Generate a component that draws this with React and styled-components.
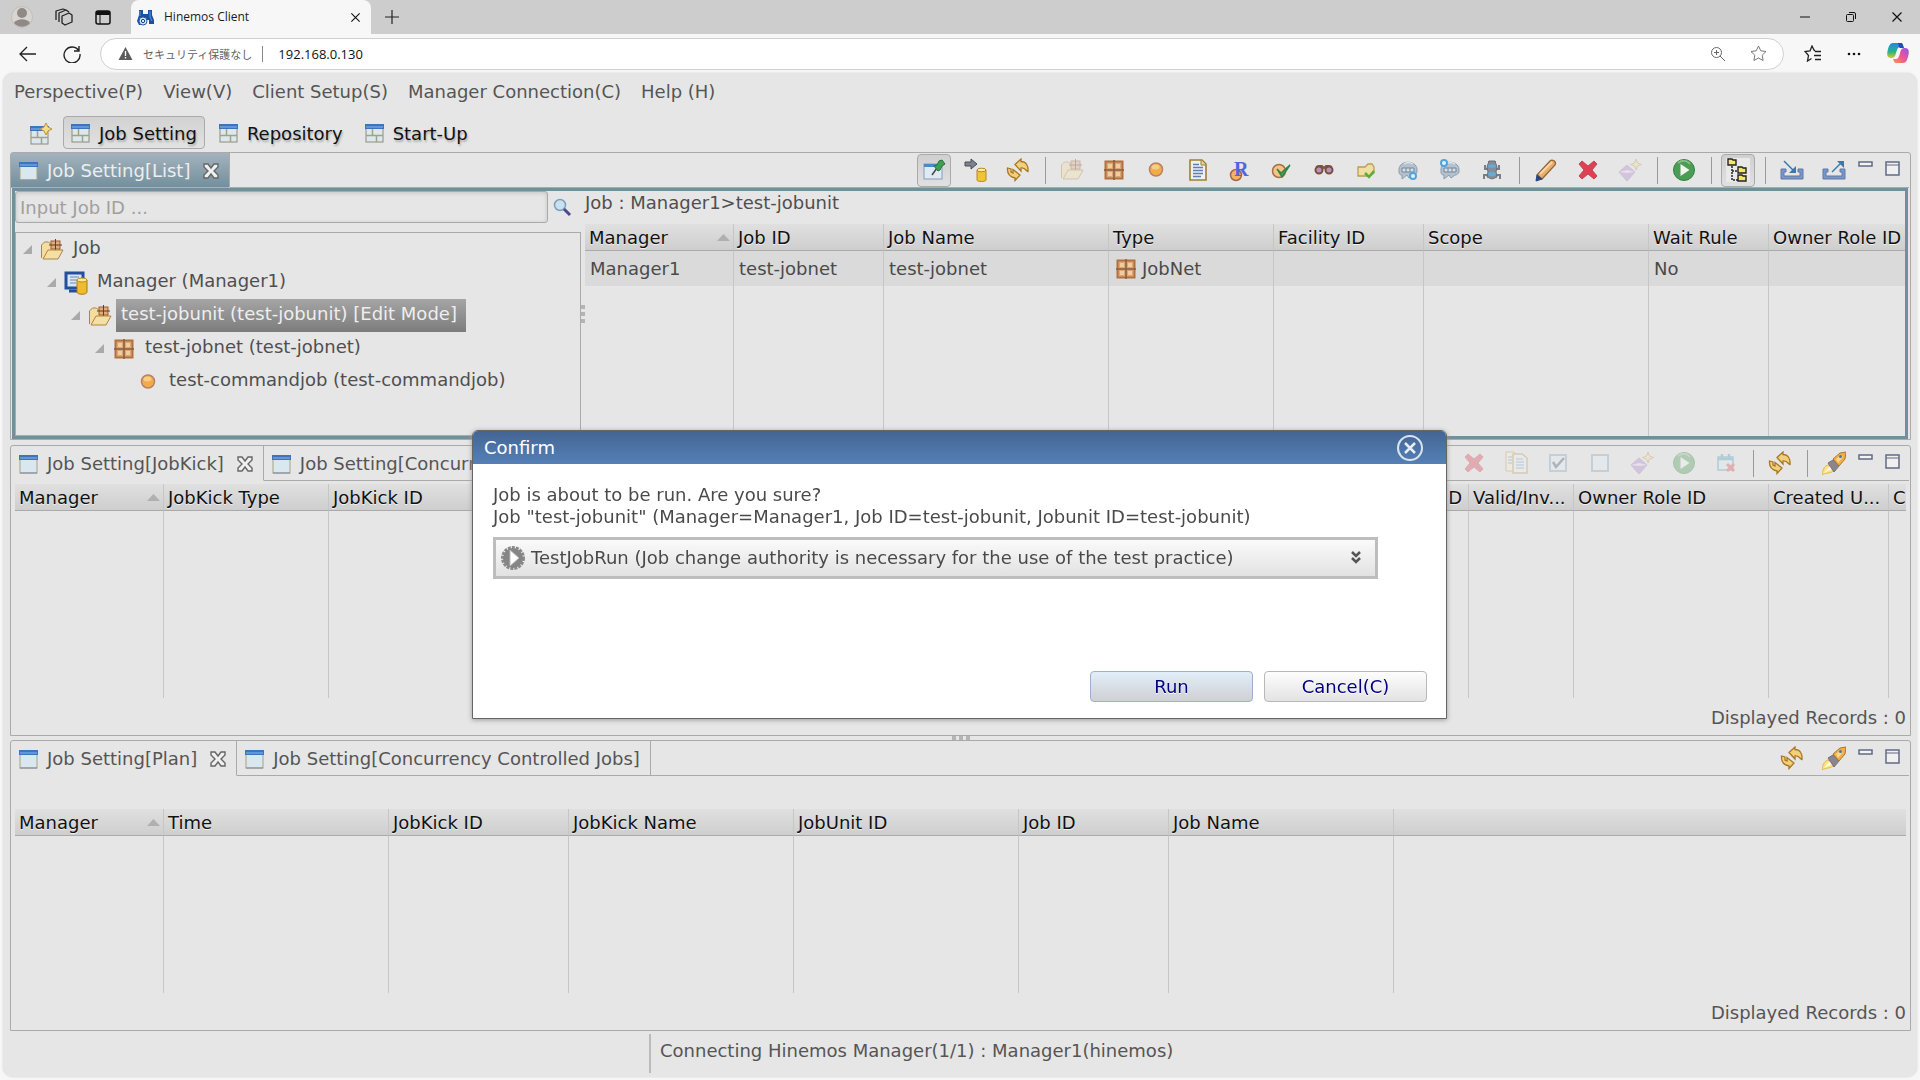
import React from "react";
import styled, { createGlobalStyle, css } from "styled-components";

const GlobalStyle = createGlobalStyle`
    * {
        box-sizing: border-box;
    }

    body {
        margin: 0;
        background: #f7f7f7;
        color: #4a4a4a;
        font-family: Verdana, "DejaVu Sans", sans-serif;
        font-size: 18px;
        line-height: 22px;
    }

    button,
    input {
        font: inherit;
        color: inherit;
    }

    button {
        margin: 0;
        padding: 0;
        border: 0;
        background: none;
    }

    a {
        color: inherit;
        text-decoration: none;
    }

    svg {
        display: block;
        flex-shrink: 0;
    }
`;

const Window = styled.div`
    display: flex;
    flex-direction: column;
    min-height: 100vh;
`;

/* browser frame */

const TitleBar = styled.header`
    display: flex;
    height: 34px;
    background: #cdcdcd;
    font-family: "Segoe UI", "Open Sans", "Noto Sans", sans-serif;
    font-size: 12px;
`;

const TitleTools = styled.div`
    display: flex;
    align-items: center;
    gap: 22px;
    width: 131px;
    padding-left: 11px;
`;

const BrowserTab = styled.div`
    display: flex;
    align-items: center;
    width: 240px;
    padding: 0 10px 0 6px;
    gap: 10px;
    border-radius: 8px 8px 0 0;
    background: #f7f7f7;
    color: #1b1b1b;

    span {
        flex: 1;
    }
`;

const NewTab = styled.button`
    width: 42px;
    display: grid;
    place-items: center;
`;

const WindowControls = styled.div`
    display: flex;
    margin-left: auto;

    button {
        display: grid;
        place-items: center;
        width: 46px;
    }
`;

const AddressBar = styled.div`
    display: flex;
    align-items: center;
    height: 39px;
    background: #f7f7f7;
    font-family: "Segoe UI", "Open Sans", "Noto Sans CJK JP", sans-serif;
    font-size: 13px;
`;

const NavButtons = styled.div`
    display: flex;
    align-items: center;
    gap: 26px;
    width: 100px;
    padding-left: 19px;
`;

const AddressField = styled.div`
    display: flex;
    align-items: center;
    flex: 1;
    height: 32px;
    padding: 0 16px 0 17px;
    border: 1px solid #d0d0d0;
    border-radius: 16px;
    background: #fff;
    gap: 10px;
`;

const Insecure = styled.span`
    padding-right: 10px;
    border-right: 1px solid #8a8a8a;
    color: #616161;
    font-family: "Noto Sans CJK JP", sans-serif;
    font-size: 11px;
    line-height: 16px;
`;

const UrlInput = styled.input`
    flex: 1;
    min-width: 0;
    padding: 0 5px;
    border: 0;
    outline: 0;
    background: none;
    color: #111;
`;

const FieldTools = styled.div`
    display: flex;
    align-items: center;
    gap: 24px;
`;

const BrowserTools = styled.div`
    display: flex;
    align-items: center;
    justify-content: space-between;
    width: 136px;
    padding: 0 11px 0 20px;
`;

/* application */

const Client = styled.div`
    display: flex;
    flex-direction: column;
    flex: 1;
    margin: 0 3px 3px;
    border-radius: 10px;
    background: #e6e6e6;
    box-shadow: 0 0 2px #ccc;
`;

const MenuBar = styled.nav`
    display: flex;
    gap: 20px;
    height: 43px;
    padding: 8px 11px 0;
    color: #555;
`;

const PerspectiveBar = styled.div`
    display: flex;
    align-items: center;
    height: 36px;
    padding: 0 22px 3px;
`;

const PerspectiveButton = styled.button`
    display: flex;
    align-items: center;
    gap: 9px;
    height: 33px;
    padding: 2px ${({ $iconOnly }) => ($iconOnly ? 4 : 7)}px 0;
    margin-right: 6px;
    border: 1px solid transparent;
    border-radius: 4px;
    color: #111;
    text-shadow: 1px 2px 2px #aaa;

    ${({ $active }) =>
        $active &&
        css`
            border-color: #aaa;
            background: linear-gradient(#d2d2d2, #e2e2e2);
        `}
`;

const Workbench = styled.main`
    display: flex;
    flex-direction: column;
    flex: 1;
    padding: 0 6px 0 7px;
`;

const Panel = styled.section`
    display: flex;
    flex-direction: column;
    flex: 1 1 ${({ $basis }) => $basis}px;
    border: 1px solid #aaa;
    border-radius: 3px 3px 0 0;
    min-width: 0;
`;

const PanelHeader = styled.div`
    display: flex;
    height: 35px;
    margin-right: 1px;
`;

const Tab = styled.div`
    display: flex;
    align-items: center;
    gap: 9px;
    padding: 2px 10px 0 8px;
    border-right: 1px solid #aaa;
    border-bottom: 1px solid ${({ $open }) => ($open ? "transparent" : "#aaa")};
    color: ${({ $focused }) => ($focused ? "#eee" : "#555")};
    background: ${({ $focused }) => ($focused ? "linear-gradient(#a3b3bd, #738f9d)" : "none")};
    white-space: nowrap;
`;

const TabClose = styled.button`
    margin-left: 4px;
`;

const ToolBar = styled.div`
    display: flex;
    align-items: center;
    justify-content: flex-end;
    flex: 1;
    border-bottom: 1px solid #aaa;
`;

const ToolButton = styled.button`
    display: grid;
    place-items: center;
    width: 34px;
    height: 33px;
    margin: 0 4px;
    border-radius: 4px;
    border: 1px solid ${({ $pressed }) => ($pressed ? "#aaa" : "transparent")};
    background: ${({ $pressed }) => ($pressed ? "linear-gradient(#d0d0d0, #e0e0e0)" : "none")};

    &:disabled {
        opacity: 0.35;
    }
`;

const Separator = styled.span`
    width: 1px;
    height: 27px;
    margin: 0 5px 0 6px;
    background: #999;
`;

const SizeButtons = styled.div`
    display: flex;
    align-items: flex-start;
    align-self: stretch;
    gap: 12px;
    padding: 8px 9px 0 3px;
`;

const PanelBody = styled.div`
    display: flex;
    flex-direction: column;
    flex: 1;
    min-width: 0;
    padding: ${({ $top }) => $top}px 4px 0;
`;

const ListBody = styled.div`
    display: flex;
    flex: 1;
    min-width: 0;
    margin: 0 2px 0 1px;
    border: 3px solid #738f9d;
`;

const TreePane = styled.div`
    display: flex;
    flex-direction: column;
    width: 566px;
`;

const SearchRow = styled.form`
    display: flex;
    align-items: center;
    gap: 5px;
    margin-bottom: 9px;
`;

const SearchInput = styled.input`
    width: 533px;
    height: 32px;
    padding: 0 4px;
    border: 1px solid #aaa;
    border-radius: 3px;
    outline: 0;
    background: #e6e6e6;
    box-shadow: inset 0 1px 4px #c4c4c4;

    &::placeholder {
        color: #a0a0a0;
        opacity: 1;
    }
`;

const Tree = styled.ul`
    flex: 1;
    margin: 0;
    padding: 0;
    border: 1px solid #aaa;
    list-style: none;
`;

const TreeItem = styled.li`
    display: flex;
    align-items: center;
    height: 33px;
    padding-left: ${({ $level }) => $level * 24 + 7}px;
`;

const TreeIcon = styled.span`
    display: grid;
    place-items: center;
    width: 26px;
    margin-left: 7px;
`;

const TreeLabel = styled.span`
    height: 33px;
    margin-left: 3px;
    padding: 4px 9px 0 5px;
    color: ${({ $selected }) => ($selected ? "#eee" : "#4f4f4f")};
    background: ${({ $selected }) => ($selected ? "linear-gradient(#a5a5a5, #7c7c7c)" : "none")};
`;

const VerticalSash = styled.div`
    display: grid;
    place-content: center;
    gap: 3px;
    width: 4px;

    i {
        width: 4px;
        height: 4px;
        background: #b4b4b4;
    }
`;

const DetailPane = styled.div`
    display: flex;
    flex-direction: column;
    flex: 1;
    min-width: 0;
`;

const JobPath = styled.div`
    height: 33px;
    padding-top: 1px;
    color: #4f4f4f;
`;

const TableWrap = styled.div`
    display: flex;
    flex: 1;
    min-width: 0;
    overflow: hidden;
`;

const Table = styled.table`
    width: 100%;
    table-layout: fixed;
    border-collapse: separate;
    border-spacing: 0;

    th {
        height: 27px;
        padding: 1px 0 0 4px;
        border-bottom: 1px solid #aaa;
        border-right: 1px solid #c6c6c6;
        background: linear-gradient(#e0e0e0, #cecece);
        color: #111;
        font-weight: normal;
        text-align: left;
        text-shadow: 0 1px 0 #f0f0f0;
        white-space: nowrap;
        overflow: hidden;
    }

    th.end {
        padding-right: 6px;
        text-align: right;
    }

    td {
        height: 35px;
        padding: 1px 0 0 5px;
        border-right: 1px solid #c6c6c6;
        background: #dadada;
    }

    tr.rest {
        height: 100%;
    }

    tr.rest td {
        height: auto;
        background: none;
    }

    th:last-child,
    td:last-child {
        border-right: 0;
    }
`;

const SortHeading = styled.span`
    display: flex;
    align-items: center;
    justify-content: space-between;
    padding-right: 3px;
`;

const TypeCell = styled.span`
    display: flex;
    align-items: center;
    gap: 4px;
`;

const Records = styled.div`
    height: 37px;
    padding-top: 9px;
    color: #555;
    text-align: right;
`;

const Gap = styled.div`
    height: 5px;
`;

const HorizontalSash = styled.div`
    display: flex;
    justify-content: center;
    align-items: center;
    gap: 3px;
    height: 4px;

    i {
        width: 4px;
        height: 4px;
        background: #b4b4b4;
    }
`;

const StatusBar = styled.footer`
    display: flex;
    height: 46px;
    padding: 3px 0 4px 646px;

    span {
        padding: 6px 0 0 9px;
        border-left: 2px solid #bbb;
        color: #555;
    }
`;

/* dialog */

const Overlay = styled.div`
    position: fixed;
    inset: 0;
    display: flex;
    align-items: flex-start;
    justify-content: center;
    padding: 430px 1px 0 0;
`;

const Dialog = styled.div`
    width: 975px;
    border: 1px solid #666;
    border-radius: 6px 6px 0 0;
    background: #fff;
    box-shadow: 0 1px 5px #999;
    overflow: hidden;
`;

const DialogTitle = styled.div`
    display: flex;
    align-items: center;
    justify-content: space-between;
    height: 33px;
    padding: 1px 22px 0 11px;
    background: linear-gradient(#436593, #5580b6);
    color: #fff;
`;

const DialogBody = styled.div`
    display: flex;
    flex-direction: column;
    padding: 20px 19px 16px 20px;

    p {
        margin: 0 0 9px;
    }
`;

const Expander = styled.button`
    display: flex;
    align-items: center;
    width: 885px;
    height: 42px;
    padding: 0 14px 0 5px;
    gap: 6px;
    border: 3px solid #bdbdbd;
    background: linear-gradient(#fafafa, #e2e2e2);
    text-align: left;

    span {
        flex: 1;
    }
`;

const DialogActions = styled.div`
    display: flex;
    justify-content: flex-end;
    gap: 11px;
    margin-top: 92px;
`;

const DialogButton = styled.button`
    width: 163px;
    height: 31px;
    border: 1px solid ${({ $primary }) => ($primary ? "#9fb0cc" : "#b8b8b8")};
    border-radius: 4px;
    background: ${({ $primary }) =>
        $primary ? "linear-gradient(#e2eef9, #cfd0d3)" : "linear-gradient(#fdfdfd, #e3e3e3)"};
    color: #000080;
    text-shadow: 0 1px 0 #fff;
`;

/* icons */

const Svg = ({ size = 24, children, ...rest }) => (
    <svg width={size} height={size} viewBox={`0 0 ${size} ${size}`} fill="none" aria-hidden="true" {...rest}>
        {children}
    </svg>
);

const ViewIcon = () => (
    <Svg size={19}>
        <rect x="1" y="1" width="17" height="17" fill="#d9e8ef" stroke="#a9a27f" />
        <path d="M1 18h17" stroke="#7f87a5" />
        <rect x="0" y="0" width="19" height="5" fill="#3d74bd" />
        <path d="M1 3h17" stroke="#8cb8ea" />
    </Svg>
);

const PerspectiveIcon = ({ open }) => (
    <Svg size={open ? 22 : 19}>
        <g transform={open ? "translate(0 3)" : undefined}>
            <rect x="1" y="1" width="17" height="17" fill="#dce8ed" stroke="#8f8c78" />
            <rect x="0" y="0" width="19" height="5" fill="#3d74bd" />
            <path d="M1 3h17" stroke="#8cb8ea" />
            <path d="M7.500 5v7M1 11.500h17M11.500 12v6" stroke="#a3a08c" strokeWidth="1.500" />
        </g>
        {open && (
            <path d="M16 0l2 4 4 2-4 2-2 4-2-4-4-2 4-2z" fill="#f3dc8c" stroke="#b99334" />
        )}
    </Svg>
);

const CloseIcon = () => (
    <Svg size={16}>
        <path
            d="M1 1h4l3 4 3-4h4v3l-4 4 4 4v3h-4l-3-4-3 4H1v-3l4-4-4-4z"
            fill="#f0f0f0"
            stroke="#666"
            strokeWidth="1.400"
        />
    </Svg>
);

const PinIcon = () => (
    <Svg>
        <rect x="2" y="6" width="18" height="15" fill="#dfeaf1" stroke="#879bc0" />
        <path d="M2 7.500h18" stroke="#4b89cb" strokeWidth="3" />
        <path d="M10 17l5-7" stroke="#445" strokeWidth="1.500" />
        <path d="M12 8l3-1 2-4 3-1 3 4-3 2-2 4-2 1z" fill="#3fa052" stroke="#22703a" />
    </Svg>
);

const SendDbIcon = () => (
    <Svg>
        <path d="M1 4h6V1l6 5-6 5V8H1z" fill="#7d818b" stroke="#4b4e57" />
        <path d="M13 12v10c0 2 9 2 9 0V12" fill="#f0c43a" stroke="#b48a1d" />
        <ellipse cx="17.500" cy="12" rx="4.500" ry="1.800" fill="#fdea9c" stroke="#b48a1d" />
    </Svg>
);

const RefreshIcon = () => (
    <Svg>
        <path
            d="M9 6.500L15 1v2.500c5 0 7.500 4 7 10-2 0-2-4-7-3.500V13z"
            fill="#f1cf7b"
            stroke="#a87722"
            strokeWidth="1.300"
        />
        <path
            d="M14 17l-5 5.500V20c-5-1-8-4-7.500-10l3.500 1v3l2 1V11.500z"
            fill="#f1cf7b"
            stroke="#a87722"
            strokeWidth="1.300"
        />
    </Svg>
);

const NetShape = () => (
    <>
        <rect x="3.500" y="3.500" width="17" height="17" fill="#dba673" stroke="#b0703f" strokeWidth="2" />
        <rect x="6" y="6" width="4" height="4" fill="#efcda0" />
        <rect x="14" y="6" width="4" height="4" fill="#efcda0" />
        <rect x="6" y="14" width="4" height="4" fill="#efcda0" />
        <rect x="14" y="14" width="4" height="4" fill="#efcda0" />
        <path d="M12 2v20M2 12h20" stroke="#8a5b42" strokeWidth="1.500" />
    </>
);

const JobNetIcon = () => (
    <Svg>
        <NetShape />
    </Svg>
);

const FolderIcon = () => (
    <Svg>
        <path d="M1.500 20V7l3-3h4l2 2h5l4 3v4" fill="#f3dda2" stroke="#ae8348" />
        <rect x="11" y="3" width="9" height="8" fill="#e3ad78" stroke="#995e36" />
        <path d="M15.500 1v11M9 7h13" stroke="#653b27" />
        <path d="M3 21l5-9h15l-5 9z" fill="#f6dfa2" stroke="#ae8348" />
    </Svg>
);

const ManagerIcon = () => (
    <Svg>
        <rect x="2" y="2" width="17" height="15" fill="#dbe6f5" stroke="#234f9c" strokeWidth="3" />
        <path d="M6 6h9M6 9h9M6 12h6" stroke="#6688bb" />
        <path d="M5 20h10" stroke="#234f9c" strokeWidth="3" />
        <path d="M13 9v12c0 3 10 3 10 0V9" fill="#eebc2c" stroke="#a97813" />
        <ellipse cx="18" cy="9" rx="5" ry="2" fill="#fdea91" stroke="#b98c20" />
    </Svg>
);

const CommandIcon = () => (
    <Svg>
        <circle cx="12" cy="11.500" r="6.500" fill="#f2ab49" stroke="#b98068" strokeWidth="1.500" />
        <ellipse cx="11.500" cy="9" rx="4" ry="2.500" fill="#f9cd85" />
    </Svg>
);

const FileIcon = () => (
    <Svg>
        <path d="M4 2h12l4 4v16H4z" fill="#eef1f4" stroke="#9b8136" strokeWidth="1.600" />
        <path d="M15 2v5h5" fill="#e9d48f" stroke="#9b8136" />
        <path d="M7 6.500h6M7 9.500h10M7 12.500h10M7 15.500h10M7 18.500h8" stroke="#5f7eb4" strokeWidth="1.400" />
    </Svg>
);

const ReferIcon = () => (
    <Svg>
        <circle cx="8" cy="17" r="5.500" fill="#f2b45e" stroke="#a5664b" strokeWidth="1.500" />
        <text x="6" y="18" fill="#5265df" fontFamily="Liberation Serif, serif" fontSize="20" fontWeight="bold">
            R
        </text>
    </Svg>
);

const ApprovalIcon = () => (
    <Svg>
        <circle cx="9" cy="13" r="6.500" fill="#f5c384" stroke="#a66e4a" strokeWidth="1.500" />
        <path d="M7 11l4 4 9-8-8 12z" fill="#43a655" stroke="#2d8744" strokeWidth="1.400" />
    </Svg>
);

const MonitorIcon = () => (
    <Svg>
        <path d="M4 9l3-1h3l2 2 2-2h3l3 1" stroke="#805846" strokeWidth="2" />
        <circle cx="7" cy="12" r="3.500" fill="#b993b7" stroke="#77503f" strokeWidth="2" />
        <circle cx="17" cy="12" r="3.500" fill="#b993b7" stroke="#77503f" strokeWidth="2" />
    </Svg>
);

const FileCheckIcon = () => (
    <Svg>
        <path d="M4 18V9h7l3-3h4l2 3v6l-4 3z" fill="#f1dfa0" stroke="#b99c5b" strokeWidth="1.300" />
        <path d="M11 15l4 4 5-6" stroke="#5aad3c" strokeWidth="2.500" />
    </Svg>
);

const CloudIcon = ({ top }) => (
    <Svg>
        <path
            d="M3 14v-3c1-9 17-9 18 0v3c-1 2-2 3-4 3l-4 3-2-3-5 4v-4c-2 0-3-1-3-3z"
            fill="#b4c2cf"
            stroke="#8c9daf"
        />
        <path d="M6 10h12v4H6zM10 10v4M14 10v4" fill="#d5dde5" stroke="#73879b" />
        <path d="M8 6c3-2 6-2 9 0" stroke="#dce4eb" strokeWidth="1.500" />
        <circle
            cx={top ? 6 : 17}
            cy={top ? 5 : 18}
            r="3"
            fill="#e6f2fa"
            stroke="#4fa3df"
            strokeWidth="2"
        />
    </Svg>
);

const RpaIcon = () => (
    <Svg>
        <path d="M4 11h16M4 21v-4h4M20 21v-4h-4M8 4h8M5 7v3M19 7v3" stroke="#777f88" strokeWidth="2" />
        <path d="M9 3h6l2 6-1 5 1 5-5 2-5-2 1-5-1-5z" fill="#858d96" stroke="#69727c" />
        <ellipse cx="12" cy="8" rx="4" ry="1.800" fill="#67a9d8" />
        <ellipse cx="12" cy="16" rx="4" ry="2.200" fill="#67a9d8" />
    </Svg>
);

const PencilIcon = () => (
    <Svg>
        <path d="M3 17L16 3c2-2 7 0 5 4L8 21z" fill="#e6ae70" stroke="#986334" strokeWidth="1.300" />
        <path d="M6 16L18 4" stroke="#f7d7a4" strokeWidth="2" />
        <path d="M3 17l5 4-6 2z" fill="#28447e" stroke="#28447e" />
    </Svg>
);

const DeleteIcon = () => (
    <Svg>
        <path d="M6 3l6 5 6-5 3 3-5 6 5 6-3 3-6-5-6 5-3-3 5-6-5-6z" fill="#dd4153" stroke="#c34654" />
    </Svg>
);

const ClearIcon = () => (
    <Svg>
        <path d="M9 7l8 7-8 9-8-9z" fill="#b287cf" stroke="#a47ac0" />
        <path d="M1 14l8-2 8 2-8 1z" fill="#ead8f3" />
        <path d="M18 1l1.500 4 4 1.500-4 1.500-1.500 4-1.500-4-4-1.500 4-1.500z" fill="#f4dfa1" stroke="#ba9957" />
    </Svg>
);

const RunIcon = () => (
    <Svg>
        <circle cx="12" cy="12" r="10.500" fill="#4b9c55" stroke="#347f42" />
        <path d="M6 5c4-3 9-3 12 1" stroke="#86bd83" strokeWidth="2" />
        <path d="M8.500 6v12l9-6z" fill="#f0f5ee" />
    </Svg>
);

const TreeViewIcon = () => (
    <Svg>
        <rect width="24" height="24" fill="#e9e9e9" />
        <path d="M6 8v14h6M6 13h6" stroke="#222" strokeWidth="1.500" strokeDasharray="2 1" />
        {[
            [2, 1],
            [12, 9],
            [12, 17],
        ].map(([x, y]) => (
            <path key={y} d={`M${x} ${y}h4l1 1h3v5h-8z`} fill="#f3e769" stroke="#222" strokeWidth="1.400" />
        ))}
    </Svg>
);

const TransferIcon = ({ out }) => (
    <Svg>
        <path d="M1 11h5v3H4v4h16v-4h-2v-3h5v10H1z" fill="#7896c7" stroke="#6079a8" />
        {out ? (
            <>
                <path d="M10 14L20 4" stroke="#397aae" strokeWidth="1.500" />
                <path d="M15 3h7v7z" fill="#397aae" />
            </>
        ) : (
            <>
                <path d="M4 3l10 10" stroke="#397aae" strokeWidth="1.500" />
                <path d="M16 8v7H9z" fill="#397aae" />
            </>
        )}
    </Svg>
);

const CopyIcon = () => (
    <Svg>
        <path d="M2 1h8l3 3v16H2z" fill="#f2efdd" stroke="#b49c54" />
        <path d="M9 3h9l5 4v15H9z" fill="#eef1f4" stroke="#b49c54" strokeWidth="1.500" />
        <path d="M4 6h4M4 9h4M4 12h4M12 8h7M12 11h8M12 14h8M12 17h8" stroke="#6c88b8" />
    </Svg>
);

const CheckBoxIcon = ({ checked }) => (
    <Svg>
        <rect x="4" y="4" width="16" height="16" fill="#e3edf4" stroke="#8aa5bd" strokeWidth="2" />
        {checked && <path d="M7 11l3 5 8-9" stroke="#405672" strokeWidth="2.500" />}
    </Svg>
);

const CalendarIcon = () => (
    <Svg>
        <rect x="4" y="6" width="15" height="13" fill="#dceaf1" stroke="#529dbd" strokeWidth="1.500" />
        <path d="M4 8h15M8 3v5M15 3v5" stroke="#529dbd" strokeWidth="2.500" />
        <path d="M13 13l7 7M20 13l-7 7" stroke="#d84955" strokeWidth="3" />
    </Svg>
);

const RocketIcon = () => (
    <Svg>
        <path d="M0 24c1-7 3-9 6-10l6 5c-3 4-7 2-12 5z" fill="#fae582" stroke="#e6b64c" />
        <path d="M2 22l7-8 3 3-6 3z" fill="#fffbe3" />
        <path d="M6 12l5-3 6 6-5 6z" fill="#8b8491" stroke="#746f79" />
        <path d="M11 8l7-6 6-1-1 7-6 7z" fill="#f2ad48" stroke="#ad762c" />
        <path d="M14 8l5-4 2 2-5 6z" fill="#f9d88b" />
        <circle cx="18.500" cy="5.500" r="1.500" fill="#417aa3" />
    </Svg>
);

const MinIcon = () => (
    <svg width="15" height="6" viewBox="0 0 15 6" aria-hidden="true">
        <rect x="1" y="1" width="13" height="4" fill="#f4f4f4" stroke="#626a85" strokeWidth="1.500" />
    </svg>
);

const MaxIcon = () => (
    <Svg size={15}>
        <rect x="1" y="1" width="13" height="13" fill="#f0f0f0" stroke="#626a85" strokeWidth="1.500" />
        <path d="M1 4h13" stroke="#626a85" />
    </Svg>
);

const SearchIcon = () => (
    <Svg size={19}>
        <circle cx="7" cy="7" r="5.500" fill="#c9e0ee" stroke="#7b9fc2" strokeWidth="1.500" />
        <path d="M11 11l6 6" stroke="#4b4b89" strokeWidth="3" />
    </Svg>
);

const ExpandedIcon = ({ hidden }) => (
    <Svg size={9}>{!hidden && <path d="M9 0v9H0z" fill="#aaa" />}</Svg>
);

const SortIcon = () => (
    <svg width="13" height="7" viewBox="0 0 13 7" aria-hidden="true">
        <path d="M6.500 0L13 7H0z" fill="#b0b0b0" />
    </svg>
);

const DialogCloseIcon = () => (
    <Svg size={28}>
        <circle cx="14" cy="14" r="12" stroke="#d9e4f1" strokeWidth="2" />
        <path d="M9 9l10 10M19 9L9 19" stroke="#e6edf6" strokeWidth="2.500" />
    </Svg>
);

const TestRunIcon = () => (
    <Svg>
        <circle cx="12" cy="12" r="10.500" stroke="#8b8b8b" strokeWidth="3" strokeDasharray="3 1" />
        <circle cx="12" cy="12" r="10" fill="#858585" />
        <path d="M9 4v16l9-8z" fill="#fff" stroke="#bbb" />
    </Svg>
);

const DoubleDownIcon = () => (
    <svg width="10" height="14" viewBox="0 0 10 14" fill="none" aria-hidden="true">
        <path d="M1 1l4 4 4-4M1 7l4 4 4-4" stroke="#555" strokeWidth="2.500" />
    </svg>
);

const ProfileIcon = () => (
    <Svg size={22}>
        <circle cx="11" cy="11" r="10.500" fill="#d9d5d0" stroke="#c2beb9" />
        <circle cx="11" cy="7" r="5" fill="#8f8a86" />
        <path d="M3 17c3-5 13-5 16 0-4 5-12 5-16 0z" fill="#8f8a86" />
    </Svg>
);

const WorkspacesIcon = () => (
    <Svg size={18}>
        <path
            d="M7 8l7-3 3 2v7l-7 3-3-2zM7 8v7M4 14V5l7-3 3 2M1 12V3l7-2 3 1"
            stroke="#222"
            strokeWidth="1.300"
            strokeLinejoin="round"
        />
    </Svg>
);

const VerticalTabsIcon = () => (
    <Svg size={16}>
        <rect x="1" y="2" width="14" height="13" rx="2" stroke="#111" strokeWidth="1.500" />
        <path d="M1 4h14" stroke="#111" strokeWidth="4" />
        <path d="M5 5v10" stroke="#111" />
    </Svg>
);

const HinemosIcon = () => (
    <Svg size={17}>
        <path d="M2 1h4v4h5V1h4v5l2 5v4h-5v-4H8v5H2l-2-4 2-6z" fill="#1c509c" />
        <path d="M3 2v5M13 2v6l2 4" stroke="#5b97d5" />
        <circle cx="6" cy="12" r="4" fill="#d9e8f5" stroke="#255ca8" />
        <circle cx="6" cy="12" r="1.700" stroke="#174684" />
    </Svg>
);

const CrossIcon = ({ size = 12 }) => (
    <svg width={size} height={size} viewBox="0 0 12 12" fill="none" aria-hidden="true">
        <path d="M1.500 1.500l9 9M10.500 1.500l-9 9" stroke="#111" strokeWidth="1.200" />
    </svg>
);

const PlusIcon = () => (
    <Svg size={14}>
        <path d="M7 0v14M0 7h14" stroke="#222" strokeWidth="1.200" />
    </Svg>
);

const MinimizeIcon = () => (
    <Svg size={12}>
        <path d="M1 6h10" stroke="#111" />
    </Svg>
);

const RestoreIcon = () => (
    <Svg size={12}>
        <rect x="1.500" y="3.500" width="7" height="7" rx="1" stroke="#111" />
        <path d="M4 1.500h5a1.500 1.500 0 0 1 1.500 1.500v5" stroke="#111" />
    </Svg>
);

const BackIcon = () => (
    <Svg size={18}>
        <path d="M17 9H1M8 2L1 9l7 7" stroke="#222" strokeWidth="1.300" />
    </Svg>
);

const ReloadIcon = () => (
    <Svg size={18}>
        <path d="M16 6a8 8 0 1 0 1 3M16 1v5h-5" stroke="#222" strokeWidth="1.400" />
    </Svg>
);

const WarningIcon = () => (
    <Svg size={15}>
        <path d="M7.500 1L14.500 14H.5z" fill="#5c5c5c" />
        <path d="M7.500 5v5M7.500 11v1.500" stroke="#fff" strokeWidth="1.300" />
    </Svg>
);

const ZoomIcon = () => (
    <Svg size={16}>
        <circle cx="6.500" cy="6.500" r="5" stroke="#666" />
        <path d="M10 10l5 5M6.500 4v5M4 6.500h5" stroke="#666" />
    </Svg>
);

const StarIcon = ({ lines }) => (
    <Svg size={17}>
        {lines ? (
            <path
                d="M11 6l-1-1-2-4-2 5-5 .5 3.500 4-1 5.500 4-2.500M11 6.500h6M10 10.500h7M11 14.500h6"
                stroke="#222"
                strokeWidth="1.300"
            />
        ) : (
            <path
                d="M8.500 1l2.300 4.800 5.200.7-3.800 3.700.9 5.300-4.600-2.500-4.600 2.500.9-5.300L1 6.500l5.200-.7z"
                stroke="#777"
            />
        )}
    </Svg>
);

const DotsIcon = () => (
    <Svg size={14}>
        <circle cx="2" cy="7" r="1.300" fill="#111" />
        <circle cx="7" cy="7" r="1.300" fill="#111" />
        <circle cx="12" cy="7" r="1.300" fill="#111" />
    </Svg>
);

const CopilotIcon = () => (
    <svg width="22" height="21" viewBox="0 0 22 21" aria-hidden="true">
        <defs>
            <linearGradient id="cool" x1="0" y1="0" x2="0" y2="1">
                <stop offset="0" stopColor="#2387e8" />
                <stop offset="0.600" stopColor="#29b584" />
                <stop offset="1" stopColor="#e6c522" />
            </linearGradient>
            <linearGradient id="warm" x1="1" y1="0" x2="0" y2="1">
                <stop offset="0" stopColor="#8b58f0" />
                <stop offset="0.500" stopColor="#ee5593" />
                <stop offset="1" stopColor="#ff9550" />
            </linearGradient>
        </defs>
        <path d="M6 0h7c2 0 2 2 3 4h-3c-2 0-3 2-4 6s-2 5-5 5c-5 0-4-5-3-9 1-3 2-6 5-6z" fill="url(#cool)" />
        <path d="M11 0h3c2 0 2 2 3 5h-4c-2-1-1-3-2-5z" fill="#1f4fb5" />
        <path d="M16 20H9c-2 0-2-2-3-4h3c2 0 3-2 4-6s2-5 5-5c5 0 4 5 3 9-1 3-2 6-5 6z" fill="url(#warm)" />
    </svg>
);

const menus = ["Perspective(P)", "View(V)", "Client Setup(S)", "Manager Connection(C)", "Help (H)"];

const listTools = [
    { name: "Pin", icon: <PinIcon />, pressed: true },
    { name: "Register", icon: <SendDbIcon /> },
    { name: "Refresh", icon: <RefreshIcon /> },
    null,
    { name: "Create job unit", icon: <FolderIcon />, disabled: true },
    { name: "Create job net", icon: <JobNetIcon /> },
    { name: "Create command job", icon: <CommandIcon /> },
    { name: "Create file transfer job", icon: <FileIcon /> },
    { name: "Create refer job", icon: <ReferIcon /> },
    { name: "Create approval job", icon: <ApprovalIcon /> },
    { name: "Create monitor job", icon: <MonitorIcon /> },
    { name: "Create file check job", icon: <FileCheckIcon /> },
    { name: "Create job link send", icon: <CloudIcon /> },
    { name: "Create job link receive", icon: <CloudIcon top /> },
    { name: "Create RPA job", icon: <RpaIcon /> },
    null,
    { name: "Modify", icon: <PencilIcon /> },
    { name: "Delete", icon: <DeleteIcon /> },
    { name: "Edit mode", icon: <ClearIcon />, disabled: true },
    null,
    { name: "Run", icon: <RunIcon /> },
    null,
    { name: "Tree view", icon: <TreeViewIcon />, pressed: true },
    null,
    { name: "Import", icon: <TransferIcon /> },
    { name: "Export", icon: <TransferIcon out /> },
];

const kickTools = [
    { name: "Delete", icon: <DeleteIcon />, disabled: true },
    { name: "Copy", icon: <CopyIcon />, disabled: true },
    { name: "Enable", icon: <CheckBoxIcon checked />, disabled: true },
    { name: "Disable", icon: <CheckBoxIcon />, disabled: true },
    { name: "Clear", icon: <ClearIcon />, disabled: true },
    { name: "Run", icon: <RunIcon />, disabled: true },
    { name: "Delete schedule", icon: <CalendarIcon />, disabled: true },
    null,
    { name: "Refresh", icon: <RefreshIcon /> },
    null,
    { name: "Filter", icon: <RocketIcon /> },
];

const planTools = [
    { name: "Refresh", icon: <RefreshIcon /> },
    { name: "Filter", icon: <RocketIcon /> },
];

const treeItems = [
    { label: "Job", icon: <FolderIcon /> },
    { label: "Manager (Manager1)", icon: <ManagerIcon /> },
    { label: "test-jobunit (test-jobunit) [Edit Mode]", icon: <FolderIcon />, selected: true },
    { label: "test-jobnet (test-jobnet)", icon: <JobNetIcon /> },
    { label: "test-commandjob (test-commandjob)", icon: <CommandIcon />, leaf: true },
];

const jobColumns = [
    { title: "Manager", width: 149, sorted: true },
    { title: "Job ID", width: 150 },
    { title: "Job Name", width: 225 },
    { title: "Type", width: 165 },
    { title: "Facility ID", width: 150 },
    { title: "Scope", width: 225 },
    { title: "Wait Rule", width: 120 },
    { title: "Owner Role ID" },
];

const jobRow = [
    "Manager1",
    "test-jobnet",
    "test-jobnet",
    <TypeCell key="type">
        <JobNetIcon />
        JobNet
    </TypeCell>,
    "",
    "",
    "No",
    "",
];

const kickColumns = [
    { title: "Manager", width: 149, sorted: true },
    { title: "JobKick Type", width: 165 },
    { title: "JobKick ID", width: 225 },
    { title: "Calendar ID", end: true },
    { title: "Valid/Inv...", width: 105 },
    { title: "Owner Role ID", width: 195 },
    { title: "Created U...", width: 120 },
    { title: "C", width: 17 },
];

const planColumns = [
    { title: "Manager", width: 149, sorted: true },
    { title: "Time", width: 225 },
    { title: "JobKick ID", width: 180 },
    { title: "JobKick Name", width: 225 },
    { title: "JobUnit ID", width: 225 },
    { title: "Job ID", width: 150 },
    { title: "Job Name", width: 225 },
    { title: "" },
];

function ViewHeader({ tabs, tools, focused }) {
    return (
        <PanelHeader>
            {tabs.map((title, i) => (
                <Tab key={title} $open={i === 0} $focused={focused && i === 0}>
                    <ViewIcon />
                    <button type="button">{title}</button>
                    {i === 0 && (
                        <TabClose type="button" aria-label={`Close ${title}`}>
                            <CloseIcon />
                        </TabClose>
                    )}
                </Tab>
            ))}
            <ToolBar>
                {tools.map((tool, i) =>
                    tool ? (
                        <ToolButton
                            key={tool.name}
                            type="button"
                            aria-label={tool.name}
                            disabled={tool.disabled}
                            $pressed={tool.pressed}
                        >
                            {tool.icon}
                        </ToolButton>
                    ) : (
                        <Separator key={i} />
                    )
                )}
                <SizeButtons>
                    <button type="button" aria-label="Minimize">
                        <MinIcon />
                    </button>
                    <button type="button" aria-label="Maximize">
                        <MaxIcon />
                    </button>
                </SizeButtons>
            </ToolBar>
        </PanelHeader>
    );
}

function DataTable({ columns, rows = [] }) {
    return (
        <TableWrap>
            <Table>
                <colgroup>
                    {columns.map((column) => (
                        <col key={column.title} width={column.width} />
                    ))}
                </colgroup>
                <thead>
                    <tr>
                        {columns.map((column) => (
                            <th key={column.title} scope="col" className={column.end ? "end" : undefined}>
                                {column.sorted ? (
                                    <SortHeading>
                                        {column.title}
                                        <SortIcon />
                                    </SortHeading>
                                ) : (
                                    column.title
                                )}
                            </th>
                        ))}
                    </tr>
                </thead>
                <tbody>
                    {rows.map((row, i) => (
                        <tr key={i}>
                            {row.map((cell, j) => (
                                <td key={j}>{cell}</td>
                            ))}
                        </tr>
                    ))}
                    <tr className="rest">
                        {columns.map((column) => (
                            <td key={column.title} />
                        ))}
                    </tr>
                </tbody>
            </Table>
        </TableWrap>
    );
}

function BrowserFrame() {
    return (
        <>
            <TitleBar>
                <TitleTools>
                    <button type="button" aria-label="Profile">
                        <ProfileIcon />
                    </button>
                    <button type="button" aria-label="Workspaces">
                        <WorkspacesIcon />
                    </button>
                    <button type="button" aria-label="Tab actions">
                        <VerticalTabsIcon />
                    </button>
                </TitleTools>
                <BrowserTab>
                    <HinemosIcon />
                    <span>Hinemos Client</span>
                    <button type="button" aria-label="Close tab">
                        <CrossIcon size={11} />
                    </button>
                </BrowserTab>
                <NewTab type="button" aria-label="New tab">
                    <PlusIcon />
                </NewTab>
                <WindowControls>
                    <button type="button" aria-label="Minimize window">
                        <MinimizeIcon />
                    </button>
                    <button type="button" aria-label="Restore window">
                        <RestoreIcon />
                    </button>
                    <button type="button" aria-label="Close window">
                        <CrossIcon />
                    </button>
                </WindowControls>
            </TitleBar>
            <AddressBar>
                <NavButtons>
                    <button type="button" aria-label="Back">
                        <BackIcon />
                    </button>
                    <button type="button" aria-label="Reload">
                        <ReloadIcon />
                    </button>
                </NavButtons>
                <AddressField>
                    <WarningIcon />
                    <Insecure>セキュリティ保護なし</Insecure>
                    <UrlInput aria-label="Address" defaultValue="192.168.0.130" />
                    <FieldTools>
                        <button type="button" aria-label="Zoom">
                            <ZoomIcon />
                        </button>
                        <button type="button" aria-label="Add to favorites">
                            <StarIcon />
                        </button>
                    </FieldTools>
                </AddressField>
                <BrowserTools>
                    <button type="button" aria-label="Favorites">
                        <StarIcon lines />
                    </button>
                    <button type="button" aria-label="Settings">
                        <DotsIcon />
                    </button>
                    <button type="button" aria-label="Copilot">
                        <CopilotIcon />
                    </button>
                </BrowserTools>
            </AddressBar>
        </>
    );
}

function ConfirmDialog() {
    return (
        <Overlay>
            <Dialog role="dialog" aria-labelledby="confirm-title">
                <DialogTitle>
                    <span id="confirm-title">Confirm</span>
                    <button type="button" aria-label="Close">
                        <DialogCloseIcon />
                    </button>
                </DialogTitle>
                <DialogBody>
                    <p>
                        Job is about to be run. Are you sure?
                        <br />
                        Job "test-jobunit" (Manager=Manager1, Job ID=test-jobunit, Jobunit ID=test-jobunit)
                    </p>
                    <Expander type="button" aria-expanded="false">
                        <TestRunIcon />
                        <span>TestJobRun (Job change authority is necessary for the use of the test practice)</span>
                        <DoubleDownIcon />
                    </Expander>
                    <DialogActions>
                        <DialogButton type="button" $primary>
                            Run
                        </DialogButton>
                        <DialogButton type="button">Cancel(C)</DialogButton>
                    </DialogActions>
                </DialogBody>
            </Dialog>
        </Overlay>
    );
}

function App() {
    return (
        <Window>
            <GlobalStyle />
            <BrowserFrame />
            <Client>
                <MenuBar>
                    {menus.map((menu) => (
                        <a key={menu} href="#menu">
                            {menu}
                        </a>
                    ))}
                </MenuBar>
                <PerspectiveBar>
                    <PerspectiveButton type="button" aria-label="Open perspective" $iconOnly>
                        <PerspectiveIcon open />
                    </PerspectiveButton>
                    <PerspectiveButton type="button" $active>
                        <PerspectiveIcon />
                        Job Setting
                    </PerspectiveButton>
                    <PerspectiveButton type="button">
                        <PerspectiveIcon />
                        Repository
                    </PerspectiveButton>
                    <PerspectiveButton type="button">
                        <PerspectiveIcon />
                        Start-Up
                    </PerspectiveButton>
                </PerspectiveBar>
                <Workbench>
                    <Panel $basis={288}>
                        <ViewHeader tabs={["Job Setting[List]"]} tools={listTools} focused />
                        <ListBody>
                            <TreePane>
                                <SearchRow>
                                    <SearchInput aria-label="Job ID" placeholder="Input Job ID ..." />
                                    <button type="button" aria-label="Search">
                                        <SearchIcon />
                                    </button>
                                </SearchRow>
                                <Tree>
                                    {treeItems.map((item, level) => (
                                        <TreeItem key={item.label} $level={level}>
                                            <ExpandedIcon hidden={item.leaf} />
                                            <TreeIcon>{item.icon}</TreeIcon>
                                            <TreeLabel $selected={item.selected}>{item.label}</TreeLabel>
                                        </TreeItem>
                                    ))}
                                </Tree>
                            </TreePane>
                            <VerticalSash>
                                <i />
                                <i />
                                <i />
                            </VerticalSash>
                            <DetailPane>
                                <JobPath>Job : Manager1&gt;test-jobunit</JobPath>
                                <DataTable columns={jobColumns} rows={[jobRow]} />
                            </DetailPane>
                        </ListBody>
                    </Panel>
                    <Gap />
                    <Panel $basis={291}>
                        <ViewHeader
                            tabs={["Job Setting[JobKick]", "Job Setting[Concurrency Control]"]}
                            tools={kickTools}
                        />
                        <PanelBody $top={3}>
                            <DataTable columns={kickColumns} />
                            <Records>Displayed Records : 0</Records>
                        </PanelBody>
                    </Panel>
                    <HorizontalSash>
                        <i />
                        <i />
                        <i />
                    </HorizontalSash>
                    <Panel $basis={291}>
                        <ViewHeader
                            tabs={["Job Setting[Plan]", "Job Setting[Concurrency Controlled Jobs]"]}
                            tools={planTools}
                        />
                        <PanelBody $top={33}>
                            <DataTable columns={planColumns} />
                            <Records>Displayed Records : 0</Records>
                        </PanelBody>
                    </Panel>
                </Workbench>
                <StatusBar>
                    <span>Connecting Hinemos Manager(1/1) : Manager1(hinemos)</span>
                </StatusBar>
            </Client>
            <ConfirmDialog />
        </Window>
    );
}

export default App;
